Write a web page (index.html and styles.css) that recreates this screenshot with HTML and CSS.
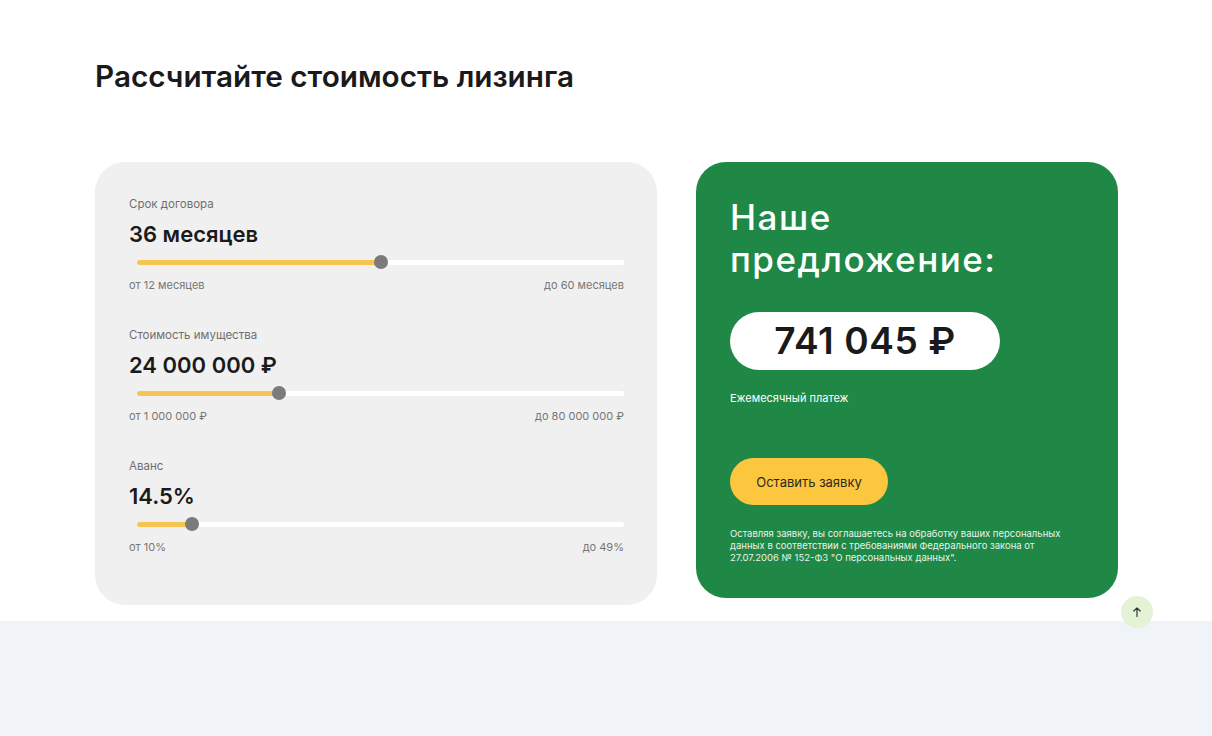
FILE: index.html
```html
<!DOCTYPE html>
<html lang="ru">
<head>
    <meta charset="UTF-8">
    <meta name="viewport" content="width=device-width, initial-scale=1.0">
    <title>Рассчитайте стоимость лизинга</title>
    <link rel="stylesheet" href="styles.css">
</head>
<body>

    <section class="calc">
        <h2 class="calc-title">Рассчитайте стоимость лизинга</h2>

        <div class="calc-row">
            <div class="calc-form">
                <div class="field">
                    <div class="field-label">Срок договора</div>
                    <div class="field-value">36 месяцев</div>
                    <div class="slider">
                        <div class="slider-track">
                            <div class="slider-fill" style="width: 50%"></div>
                            <div class="slider-thumb" style="left: 50%"></div>
                        </div>
                    </div>
                    <div class="field-range">
                        <span>от 12 месяцев</span>
                        <span>до 60 месяцев</span>
                    </div>
                </div>

                <div class="field">
                    <div class="field-label">Стоимость имущества</div>
                    <div class="field-value">24 000 000 ₽</div>
                    <div class="slider">
                        <div class="slider-track">
                            <div class="slider-fill" style="width: 29.1%"></div>
                            <div class="slider-thumb" style="left: 29.1%"></div>
                        </div>
                    </div>
                    <div class="field-range">
                        <span>от 1 000 000 ₽</span>
                        <span>до 80 000 000 ₽</span>
                    </div>
                </div>

                <div class="field">
                    <div class="field-label">Аванс</div>
                    <div class="field-value">14.5%</div>
                    <div class="slider">
                        <div class="slider-track">
                            <div class="slider-fill" style="width: 11.3%"></div>
                            <div class="slider-thumb" style="left: 11.3%"></div>
                        </div>
                    </div>
                    <div class="field-range">
                        <span>от 10%</span>
                        <span>до 49%</span>
                    </div>
                </div>
            </div>

            <div class="offer">
                <h3 class="offer-title">Наше<br>предложение:</h3>
                <div class="offer-sum">741 045 ₽</div>
                <div class="offer-note">Ежемесячный платеж</div>
                <button class="offer-button">Оставить заявку</button>
                <p class="offer-legal">Оставляя заявку, вы соглашаетесь на обработку ваших персональных данных в соответствии с требованиями Федерального закона от 27.07.2006 № 152-ФЗ "О персональных данных".</p>
            </div>
        </div>

        <button class="to-top" aria-label="Наверх">
            <svg width="12" height="12" viewBox="0 0 12 12" fill="none" stroke="#333" stroke-width="1.2" stroke-linecap="round" stroke-linejoin="round">
                <path d="M6 10.5V1.8M2.8 5L6 1.8 9.2 5"/>
            </svg>
        </button>
    </section>

    <div class="footer-band"></div>

</body>
</html>
```

FILE: styles.css
```css
body {
    margin: 0;
    font-family: Inter, "Noto Sans", sans-serif;
    background-color: #fff;
    color: #1a1a1a;
}
.calc {
    position: relative;
    padding: 58px 94px 16px 95px;
}
.calc-title {
    margin: 0 0 68px;
    font-size: 29.7px;
    line-height: 36px;
    font-weight: 600;
    color: #1a1a1a;
}
.calc-row {
    display: flex;
    align-items: flex-start;
    gap: 39px;
}
.calc-form {
    width: 562px;
    box-sizing: border-box;
    padding: 34px 33px 51px 34px;
    background-color: #f0f0f0;
    border-radius: 30px;
}
.field + .field {
    margin-top: 35px;
}
.field-label {
    font-size: 11.5px;
    line-height: 16px;
    color: #6f6f6f;
    margin-bottom: 8px;
}
.field-value {
    font-size: 22px;
    line-height: 28px;
    font-weight: 600;
    color: #1a1a1a;
    margin-bottom: 7px;
}
.slider {
    height: 14px;
    display: flex;
    align-items: center;
    padding-left: 8px;
}
.slider-track {
    position: relative;
    flex: 1;
    height: 5px;
    border-radius: 3px;
    background-color: #fff;
}
.slider-fill {
    height: 100%;
    border-radius: 3px;
    background-color: #f6c54f;
}
.slider-thumb {
    position: absolute;
    top: 50%;
    width: 14px;
    height: 14px;
    margin: -7px 0 0 -7px;
    border-radius: 50%;
    background-color: #7b7b7b;
}
.field-range {
    display: flex;
    justify-content: space-between;
    margin-top: 9px;
    font-size: 11px;
    line-height: 14px;
    color: #777;
}
.offer {
    width: 422px;
    box-sizing: border-box;
    padding: 34px;
    background-color: #1f8846;
    border-radius: 30px;
    color: #fff;
}
.offer-title {
    margin: 0 0 32px;
    font-size: 35px;
    line-height: 42px;
    font-weight: 500;
    letter-spacing: 1.5px;
}
.offer-sum {
    width: 270px;
    height: 58px;
    border-radius: 29px;
    background-color: #fff;
    color: #1a1a1a;
    font-size: 37px;
    line-height: 58px;
    font-weight: 600;
    letter-spacing: 0.6px;
    text-align: center;
}
.offer-note {
    margin-top: 21px;
    font-size: 11px;
    line-height: 14px;
}
.offer-button {
    display: block;
    margin-top: 53px;
    width: 158px;
    height: 47px;
    border: none;
    border-radius: 24px;
    background-color: #fcc63e;
    color: #2d2a1e;
    font-family: inherit;
    font-size: 13px;
    cursor: pointer;
}
.offer-legal {
    max-width: 340px;
    margin: 23px 0 0;
    font-size: 9.5px;
    line-height: 12px;
    color: #e8f3ec;
}
.to-top {
    position: absolute;
    right: 59px;
    bottom: -7px;
    width: 32px;
    height: 32px;
    border: none;
    border-radius: 50%;
    background-color: #e4f2d6;
    display: flex;
    align-items: center;
    justify-content: center;
    padding: 0;
    z-index: 1;
}
.footer-band {
    height: 115px;
    background-color: #f0f3f8;
}
```
